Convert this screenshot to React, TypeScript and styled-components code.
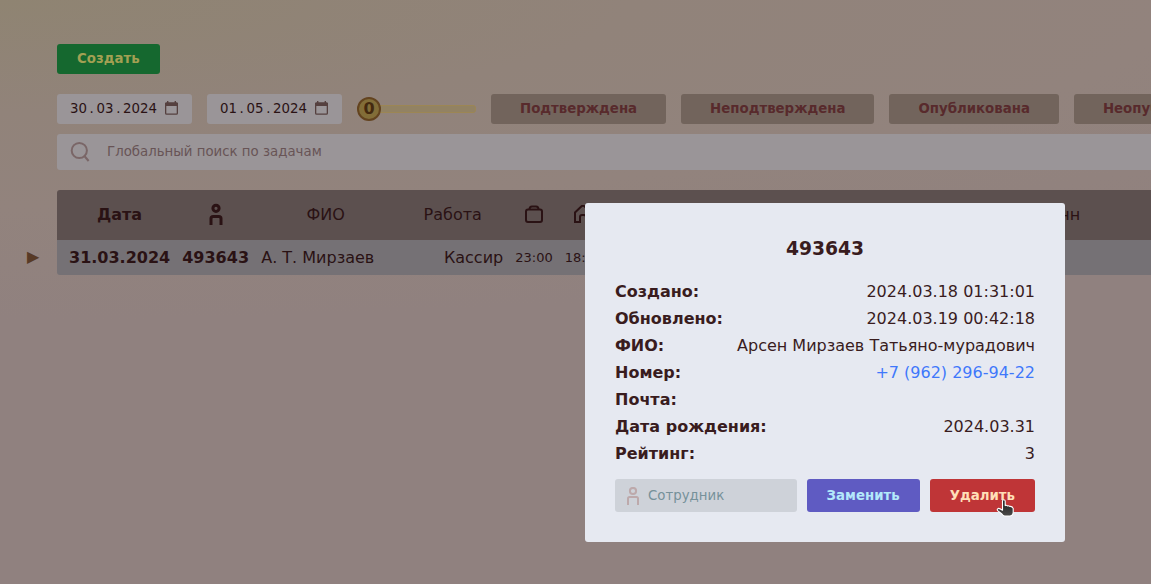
import React from "react";
import styled, { createGlobalStyle } from "styled-components";

const GlobalStyle = createGlobalStyle`
  *, *::before, *::after { box-sizing: border-box; }
  html { height: 100%; }
  body {
    margin: 0;
    min-height: 100%;
    overflow: hidden;
    font-family: "DejaVu Sans", sans-serif;
    font-size: 16px;
    color: #2a1214;
    background: radial-gradient(1800px 320px at 0 0, #8f8472 0, #91837a 35%, #92837d 65%, #90817f 100%) no-repeat;
    background-color: #90817f;
  }
  button, input { font-family: inherit; }
`;

const Page = styled.div`
  min-height: 100vh;
  padding-top: 44px;
  overflow: hidden;
`;

const Main = styled.main`
  display: flex;
  flex-direction: column;
`;

const Bar = styled.div<{ $top?: number }>`
  display: flex;
  gap: 15px;
  margin: ${(p) => p.$top ?? 0}px 0 0 57px;
`;

const Button = styled.button<{ $bg: string; $fg: string; $pad?: number; $tall?: boolean }>`
  flex: none;
  height: ${(p) => (p.$tall ? 33 : 30)}px;
  padding: 0 ${(p) => p.$pad ?? 20}px ${(p) => (p.$tall ? 0 : 2)}px;
  border: 0;
  border-radius: 3px;
  background: ${(p) => p.$bg};
  color: ${(p) => p.$fg};
  font-weight: bold;
  cursor: pointer;
`;

const DateField = styled.label`
  flex: none;
  display: flex;
  align-items: center;
  justify-content: space-between;
  width: 135px;
  height: 30px;
  padding: 0 14px 2px 13px;
  border-radius: 3px;
  background: #9a9598;
`;

const DateInput = styled.input`
  width: 92px;
  padding: 0;
  border: 0;
  outline: 0;
  background: transparent;
  color: #2a1214;
`;

const SliderBox = styled.label`
  position: relative;
  flex: none;
  display: flex;
  align-items: center;
  width: 119px;
  height: 30px;
`;

const Slider = styled.input`
  appearance: none;
  width: 100%;
  height: 8px;
  margin: 0;
  border: 1px solid #9c8654;
  border-radius: 3px;
  background: #928263;
  &::-webkit-slider-thumb {
    appearance: none;
    width: 24px;
    height: 24px;
    margin-left: -1px;
    border: 2px solid #63431f;
    border-radius: 50%;
    background: #826d38;
  }
`;

const SliderValue = styled.output`
  position: absolute;
  left: 0;
  width: 24px;
  text-align: center;
  font-size: 16px;
  font-weight: bold;
  line-height: 24px;
  color: #44290f;
  pointer-events: none;
`;

const SearchBox = styled.label`
  display: flex;
  align-items: center;
  gap: 16px;
  height: 36px;
  margin: 10px 0 0 57px;
  padding: 0 0 1px 13px;
  border-radius: 3px 0 0 3px;
  background: #9a9598;
  color: #7a6667;
`;

const TextInput = styled.input<{ $placeholder: string }>`
  flex: 1;
  min-width: 0;
  padding: 0;
  border: 0;
  outline: 0;
  background: transparent;
  color: inherit;
  &::placeholder { color: ${(p) => p.$placeholder}; opacity: 1; }
`;

const TableArea = styled.div`
  display: flex;
  align-items: flex-end;
  margin-top: 20px;
`;

const RowMarker = styled.span`
  flex: none;
  width: 57px;
  padding: 0 0 2px 27px;
  line-height: 33px;
  color: #583a26;
`;

const Table = styled.table`
  flex: 1;
  min-width: 0;
  table-layout: fixed;
  border-collapse: collapse;
  border-radius: 3px 0 0 3px;
  overflow: hidden;
  white-space: nowrap;
`;

const HeadRow = styled.tr`
  height: 50px;
  background: #5c504f;
`;

const BodyRow = styled.tr`
  height: 35px;
  background: #757175;
`;

const Th = styled.th<{ $bold?: boolean; $right?: boolean; $first?: boolean }>`
  padding: 0 6px 2px ${(p) => (p.$first ? 12 : 6)}px;
  font-weight: ${(p) => (p.$bold ? "bold" : "normal")};
  text-align: ${(p) => (p.$right ? "right" : "center")};
  svg { display: block; margin: 0 auto; }
`;

const Td = styled.td<{ $bold?: boolean; $right?: boolean; $small?: boolean; $first?: boolean }>`
  padding: 0 6px 0 ${(p) => (p.$first ? 12 : 6)}px;
  font-size: ${(p) => (p.$small ? 13 : 16)}px;
  font-weight: ${(p) => (p.$bold ? "bold" : "normal")};
  text-align: ${(p) => (p.$right ? "right" : "left")};
`;

const Dialog = styled.section`
  position: absolute;
  top: 203px;
  right: 86px;
  width: 480px;
  padding: 30px;
  border-radius: 3px;
  background: #e6e9f1;
  color: #391c1e;
`;

const Title = styled.h3`
  margin: 0 0 13px;
  text-align: center;
  line-height: 32px;
`;

const Details = styled.dl`
  margin: 0 0 12px;
`;

const Detail = styled.div`
  display: flex;
  justify-content: space-between;
  line-height: 27px;
  dt { font-weight: bold; }
  dd { margin: 0; }
`;

const Phone = styled.a`
  color: #3f78fb;
  text-decoration: none;
`;

const Actions = styled.form`
  display: flex;
  gap: 10px;
`;

const EmployeeBox = styled.label`
  flex: 1;
  min-width: 0;
  display: flex;
  align-items: center;
  gap: 9px;
  height: 33px;
  padding: 0 12px;
  border-radius: 3px;
  background: #ced2d9;
  color: #bda9ab;
`;

const Pointer = styled.svg`
  position: absolute;
  top: 295px;
  right: 49px;
`;

const CalendarIcon = () => (
  <svg width="13" height="14" viewBox="0 0 13 14" fill="none" aria-hidden="true">
    <rect x="0.65" y="2.2" width="11.7" height="11" rx="1" stroke="#55403f" strokeWidth="1.3" />
    <path d="M0 2.5q0-1 1-1h11q1 0 1 1V5H0zM2 0h1.4v2H2zM9.6 0H11v2H9.6z" fill="#55403f" />
  </svg>
);

const SearchIcon = () => (
  <svg width="21" height="22" viewBox="0 0 21 22" fill="none" stroke="currentColor" strokeWidth="2" aria-hidden="true">
    <circle cx="9.3" cy="9.5" r="7.6" />
    <path d="M14 14.5L18.6 20" />
  </svg>
);

const PersonIcon = ({ thin }: { thin?: boolean }) =>
  thin ? (
    <svg width="12" height="18" viewBox="0 0 12 18" fill="none" stroke="currentColor" strokeWidth="2" aria-hidden="true">
      <circle cx="6" cy="4" r="3.1" />
      <path d="M1 18v-6.4q0-1.600 1.600-1.600h6.800q1.600 0 1.600 1.600V18" />
    </svg>
  ) : (
    <svg width="14" height="22" viewBox="0 0 14 22" fill="none" stroke="currentColor" strokeWidth="3" aria-hidden="true">
      <circle cx="7" cy="5.3" r="3.1" />
      <path d="M2 22v-6.4q0-2.2 2.2-2.2h5.6q2.2 0 2.2 2.2V22" />
    </svg>
  );

const CaseIcon = () => (
  <svg width="18" height="18" viewBox="0 0 18 18" fill="none" stroke="currentColor" strokeWidth="2" aria-hidden="true">
    <rect x="1" y="4.500" width="16" height="12.500" rx="2" />
    <path d="M4.500 4.500q0-3 2.500-3h4q2.500 0 2.500 3" />
  </svg>
);

const HomeIcon = () => (
  <svg width="18" height="18" viewBox="0 0 18 18" fill="none" stroke="currentColor" strokeWidth="2" aria-hidden="true">
    <path d="M1 17V7.500L7.500 1.300q1.500-1.200 3 0L17 7.500V17h-5v-5q0-2-2-2H8q-2 0-2 2v5z" />
  </svg>
);

const filters = ["Подтверждена", "Неподтверждена", "Опубликована", "Неопубликована"];

const columns = [119, 79, 141, 113, 49, 49, 478];

export default function App() {
  return (
    <Page>
      <GlobalStyle />
      <Main>
        <Bar>
          <Button type="button" $bg="#15682f" $fg="#a3a053">Создать</Button>
        </Bar>
        <Bar $top={20}>
          {["30\u2009.\u200903\u2009.\u20092024", "01\u2009.\u200905\u2009.\u20092024"].map((d, i) => (
            <DateField key={d}>
              <DateInput defaultValue={d} aria-label={i ? "Дата по" : "Дата с"} />
              <CalendarIcon />
            </DateField>
          ))}
          <SliderBox>
            <Slider type="range" min="0" max="10" defaultValue="0" aria-label="Рейтинг" />
            <SliderValue>0</SliderValue>
          </SliderBox>
          {filters.map((f) => (
            <Button key={f} type="button" $bg="#72645c" $fg="#582a2c" $pad={29}>{f}</Button>
          ))}
        </Bar>
        <SearchBox>
          <SearchIcon />
          <TextInput $placeholder="#685456" placeholder="Глобальный поиск по задачам" />
        </SearchBox>
        <TableArea>
          <RowMarker>▶</RowMarker>
          <Table>
            <colgroup>
              {columns.map((w, i) => <col key={i} width={w} />)}
              <col />
            </colgroup>
            <thead>
              <HeadRow>
                <Th $bold $first>Дата</Th>
                <Th><PersonIcon /></Th>
                <Th>ФИО</Th>
                <Th>Работа</Th>
                <Th><CaseIcon /></Th>
                <Th><HomeIcon /></Th>
                <Th $right>нн</Th>
                <Th />
              </HeadRow>
            </thead>
            <tbody>
              <BodyRow>
                <Td $bold $first>31.03.2024</Td>
                <Td $bold>493643</Td>
                <Td>А. Т. Мирзаев</Td>
                <Td $right>Кассир</Td>
                <Td $small>23:00</Td>
                <Td $small>18:00</Td>
                <Td />
                <Td />
              </BodyRow>
            </tbody>
          </Table>
        </TableArea>
      </Main>
      <Dialog role="dialog" aria-labelledby="task-title">
        <Title id="task-title">493643</Title>
        <Details>
          <Detail><dt>Создано:</dt><dd>2024.03.18 01:31:01</dd></Detail>
          <Detail><dt>Обновлено:</dt><dd>2024.03.19 00:42:18</dd></Detail>
          <Detail><dt>ФИО:</dt><dd>Арсен Мирзаев Татьяно-мурадович</dd></Detail>
          <Detail><dt>Номер:</dt><dd><Phone href="tel:+79622969422">+7 (962) 296-94-22</Phone></dd></Detail>
          <Detail><dt>Почта:</dt><dd /></Detail>
          <Detail><dt>Дата рождения:</dt><dd>2024.03.31</dd></Detail>
          <Detail><dt>Рейтинг:</dt><dd>3</dd></Detail>
        </Details>
        <Actions>
          <EmployeeBox>
            <PersonIcon thin />
            <TextInput $placeholder="#76919a" placeholder="Сотрудник" />
          </EmployeeBox>
          <Button type="button" $bg="#5f5bc2" $fg="#b3e9fb" $tall>Заменить</Button>
          <Button type="button" $bg="#bf3537" $fg="#ffdfb8" $tall>Удалить</Button>
        </Actions>
        <Pointer width="20" height="20" viewBox="0 0 20 20" aria-hidden="true">
          <defs>
            <linearGradient id="hand" x1="0" y1="0" x2="0" y2="1">
              <stop offset="0" stopColor="#1c1c1c" />
              <stop offset="1" stopColor="#4a4a4a" />
            </linearGradient>
          </defs>
          <path
            d="M6.500 3q0-1.300 1.300-1.300T9.200 3v4.600q1.300-0.700 2.300 0.300 1.200-0.500 2.200 0.500 2.500-0.300 3.500 2v4.200q0 2.800-3 3.400H8.500q-1.500-0.400-2.600-2L1.600 12.600q-0.900-1.700 0.700-2.200 1.300-0.200 4.200 1.800z"
            fill="url(#hand)" stroke="#fff" strokeWidth="1.1" strokeLinejoin="round"
          />
        </Pointer>
      </Dialog>
    </Page>
  );
}
